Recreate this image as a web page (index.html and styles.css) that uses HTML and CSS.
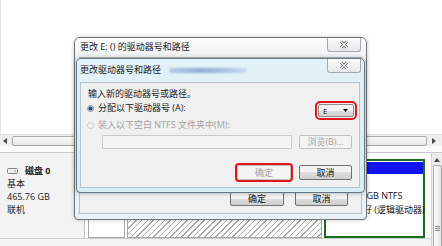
FILE: index.html
```html
<!DOCTYPE html>
<html lang="zh-CN">
<head>
<meta charset="utf-8">
<title>更改驱动器号和路径</title>
<link rel="stylesheet" href="styles.css">
</head>
<body>
<div class="mmc">
  <div class="volumes"></div>
  <div class="hscroll">
    <svg class="sb-arrow" width="4" height="6" viewBox="0 0 4 6"><path d="M4 0 L0 3 L4 6 Z" fill="#4a4a4a"/></svg>
    <div class="hthumb"></div>
    <svg class="sb-arrow" width="4" height="6" viewBox="0 0 4 6"><path d="M0 0 L4 3 L0 6 Z" fill="#4a4a4a"/></svg>
  </div>
  <div class="hgap"></div>
  <div class="lower">
    <div class="lower-main">
      <div class="disk-row">
        <div class="disk-info">
          <div class="disk-name">
            <svg class="disk-icon" width="11" height="6" viewBox="0 0 11 6"><rect x="0.5" y="0.5" width="10" height="5" rx="1" fill="#eef0f2" stroke="#7d8387"/><rect x="7" y="2.5" width="2" height="1" fill="#7d8387"/></svg>
            <b>磁盘 0</b>
          </div>
          <div>基本</div>
          <div>465.76 GB</div>
          <div>联机</div>
        </div>
        <div class="parts">
          <div class="part part-c"></div>
          <div class="part part-ext"></div>
          <div class="part part-f">
            <div class="part-bar"></div>
            <div class="part-text first">146.48 GB NTFS</div>
            <div class="part-text">状态良好 (逻辑驱动器)</div>
          </div>
        </div>
      </div>
    </div>
    <div class="vscroll">
      <svg width="6" height="4" viewBox="0 0 6 4"><path d="M0 4 L3 0 L6 4 Z" fill="#4a4a4a"/></svg>
      <div class="vthumb"><span class="grip"></span></div>
    </div>
  </div>
</div>

<div class="dlg dlg-outer">
  <div class="titlebar">
    <span class="title">更改 E: () 的驱动器号和路径</span>
    <span class="close"><svg width="10" height="9" viewBox="0 0 10 9"><path d="M2 1.5 L8 7.5 M8 1.5 L2 7.5" stroke="#6a6a6a" stroke-width="3"/><path d="M2 1.5 L8 7.5 M8 1.5 L2 7.5" stroke="#f6f6f6" stroke-width="1.1"/></svg></span>
  </div>
  <div class="panel-outer">
    <span class="btn">确定</span>
    <span class="btn w53">取消</span>
  </div>
</div>

<div class="dlg dlg-inner">
  <div class="titlebar">
    <span class="title">更改驱动器号和路径</span>
    <span class="smudge"></span>
    <span class="close"><svg width="10" height="9" viewBox="0 0 10 9"><path d="M2 1.5 L8 7.5 M8 1.5 L2 7.5" stroke="#6a6a6a" stroke-width="3"/><path d="M2 1.5 L8 7.5 M8 1.5 L2 7.5" stroke="#f6f6f6" stroke-width="1.1"/></svg></span>
  </div>
  <div class="panel">
    <div class="prompt">输入新的驱动器号或路径。</div>
    <div class="row-assign">
      <label class="opt"><span class="radio on"></span>分配以下驱动器号 (A):</label>
      <span class="combo"><span>E</span><svg width="5" height="3" viewBox="0 0 5 3"><path d="M0 0 L5 0 L2.5 3 Z" fill="#111"/></svg></span>
    </div>
    <label class="opt disabled"><span class="radio"></span>装入以下空白 NTFS 文件夹中(M):</label>
    <div class="row-path">
      <span class="textbox"></span>
      <span class="btn disabled w53">浏览(B)...</span>
    </div>
    <div class="row-buttons">
      <span class="btn disabled marked">确定</span>
      <span class="btn w53">取消</span>
    </div>
  </div>
</div>
</body>
</html>
```
FILE: styles.css
```css
* { box-sizing: border-box; }
html, body { margin: 0; padding: 0; }
body {
  width: 442px;
  height: 246px;
  overflow: hidden;
  position: relative;
  background: #fff;
  font-family: "Open Sans", "Noto Sans CJK SC", sans-serif;
  font-size: 9px;
  color: #1b1b1b;
}

/* background: disk management window */
.mmc { display: flex; flex-direction: column; height: 246px; }
.volumes { height: 134px; background: #fff; border-left: 1px solid #e4e4e4; }
.hscroll {
  height: 12px;
  display: flex;
  align-items: center;
  gap: 5px;
  padding: 0 6px 0 3px;
  background: #efefef;
  border-top: 1px solid #dedede;
}
.hthumb {
  flex: 1;
  height: 10px;
  border: 1px solid #a9a9a9;
  border-radius: 2px;
  background: linear-gradient(#fafafa, #e6e6e6);
}
.hgap { height: 7px; border-bottom: 1px solid #c9c9c9; background: #fbfbfb; }
.lower { flex: 1; display: flex; }
.lower-main { flex: 1; display: flex; flex-direction: column; background: #f4f4f4; }
.disk-row { height: 86px; display: flex; border-bottom: 1px solid #cdcdcd; }
.disk-info {
  width: 85px;
  background: #f3f3f3;
  border-right: 1px solid #c6c6c6;
  padding: 11px 0 0 7px;
  line-height: 13px;
  color: #222;
}
.disk-name { display: flex; align-items: center; gap: 7px; }
.disk-name b { font-weight: 700; }
.parts { flex: 1; display: flex; gap: 2px; padding: 6px 6px 0 3px; background: #fff; }
.part { height: 79px; }
.part-c { width: 37px; border: 1px solid #a7a7a7; background: #fff; }
.part-ext {
  width: 195px;
  border: 1px solid #a7a7a7;
  background: repeating-linear-gradient(-45deg, #fff 0 2px, #a9a9a9 2px 3px, #fff 3px 4px);
}
.part-f { width: 101px; border: 2px solid #1d6b1f; background: #fff; }
.part-bar { height: 12px; margin: 1px 0 0 2px; background: #0f14ef; }
.part-text { padding-left: 10px; line-height: 14px; color: #111; white-space: nowrap; }
.part-text.first { margin-top: 15px; }
.vscroll {
  width: 11px;
  background: #ececec;
  border-left: 1px solid #d4d4d4;
  display: flex;
  flex-direction: column;
  align-items: center;
  padding-top: 5px;
}
.vthumb {
  margin-top: 3px;
  width: 9px;
  flex: 1;
  border: 1px solid #a9a9a9;
  border-bottom: 0;
  border-radius: 2px 2px 0 0;
  background: linear-gradient(90deg, #fafafa, #e4e4e4);
  display: flex;
  justify-content: center;
  padding-top: 60px;
}
.grip {
  width: 5px;
  height: 5px;
  background: repeating-linear-gradient(#8a8a8a 0 1px, transparent 1px 2px);
}

/* dialogs */
.dlg { position: absolute; display: flex; flex-direction: column; border: 1px solid #6f7478; }
.dlg-outer {
  left: 74px; top: 37px; width: 293px; height: 183px;
  border-radius: 6px 6px 4px 4px;
  background: #eef1f3;
  box-shadow: 0 0 4px rgba(0, 0, 0, 0.22);
}
.dlg-inner {
  left: 76px; top: 58px; width: 289px; height: 135px;
  border-radius: 5px 5px 4px 4px;
  background: linear-gradient(#e3f2f8, #d8ecf3);
  border-color: #667580;
  box-shadow: 0 0 5px rgba(0, 0, 0, 0.28);
}
.titlebar { display: flex; align-items: flex-start; flex: none; }
.title { line-height: 12px; white-space: nowrap; color: #1a1a1a; }
.dlg-outer .titlebar { height: 19px; background: linear-gradient(#fbfbfb, #f0f2f3); border-radius: 5px 5px 0 0; }
.dlg-outer .title { padding: 3px 0 0 5px; }
.dlg-outer .close { margin-right: 5px; }
.dlg-inner .titlebar { height: 23px; }
.dlg-inner .title { padding: 5px 0 0 3px; }
.dlg-inner .close { margin-right: 3px; }
.smudge {
  width: 78px;
  height: 5px;
  margin: 9px 0 0 8px;
  border-radius: 3px;
  background: linear-gradient(90deg, #b9cbe3, #8eaed8 40%, #a9c0e0 70%, #c9d8ea);
  filter: blur(1.2px);
}
.close {
  margin-left: auto;
  width: 34px;
  height: 14px;
  border: 1px solid #a4aaae;
  border-top: 0;
  border-radius: 0 0 3px 3px;
  background: linear-gradient(#fbfbfb, #e6e9eb);
  display: flex;
  align-items: center;
  justify-content: center;
}

.panel-outer {
  flex: 1;
  margin: 0 4px 5px;
  background: #f0f0f0;
  border: 1px solid #b6c2c9;
  display: flex;
  align-items: flex-end;
  justify-content: flex-end;
  gap: 11px;
  padding: 0 13px 7px 0;
}
.panel {
  flex: 1;
  margin: 0 4px 4px 3px;
  background: #f0f0f0;
  border: 1px solid #b4c7d1;
  padding: 5px 5px 0 6px;
  display: flex;
  flex-direction: column;
}
.prompt { margin-left: 1px; line-height: 12px; }
.row-assign { margin-top: 1px; height: 17px; display: flex; align-items: flex-start; }
.opt { display: flex; align-items: center; line-height: 12px; white-space: nowrap; }
.row-assign .opt { margin-top: 1px; }
.opt.disabled { margin-top: 1px; color: #a3a3a3; }
.radio {
  width: 7px; height: 7px;
  margin-right: 4px;
  border-radius: 50%;
  border: 1px solid #8d969c;
  background: radial-gradient(#fff, #e3e3e3);
}
.radio.on { background: radial-gradient(circle, #2a4f7a 0 1.5px, #7f9bb8 2px, #f2f2f2 2.6px); }
.opt.disabled .radio { border-color: #c8c8c8; background: #f4f4f4; }
.combo {
  margin: 3px 0 0 auto;
  width: 36px; height: 13px;
  border: 1px solid #8c8e90;
  border-radius: 2px;
  background: linear-gradient(#f3f3f3 50%, #dedede 50%, #d2d2d2);
  outline: 2px solid #e4151d;
  outline-offset: 1px;
  display: flex;
  align-items: center;
  justify-content: space-between;
  padding: 0 5px 0 4px;
  font-size: 8px;
  line-height: 11px;
}
.row-path { margin-top: 4px; display: flex; padding-left: 15px; }
.textbox { width: 190px; height: 14px; border: 1px solid #cbcbcb; background: #f4f4f4; }
.row-path .btn { margin-left: 7px; height: 14px; line-height: 12px; }
.row-buttons { margin-top: 16px; display: flex; justify-content: flex-end; gap: 8px; padding-right: 2px; }
.btn {
  width: 54px;
  height: 15px;
  border: 1px solid #707070;
  border-radius: 2px;
  background: linear-gradient(#f2f2f2 50%, #dddddd 50%, #cfcfcf);
  text-align: center;
  line-height: 13px;
  color: #111;
  white-space: nowrap;
}
.btn.w53 { width: 53px; }
.btn.disabled { border-color: #c2c2c2; background: #f4f4f4; color: #a3a3a3; }
.btn.marked { outline: 2px solid #e4151d; outline-offset: 0; }
```
